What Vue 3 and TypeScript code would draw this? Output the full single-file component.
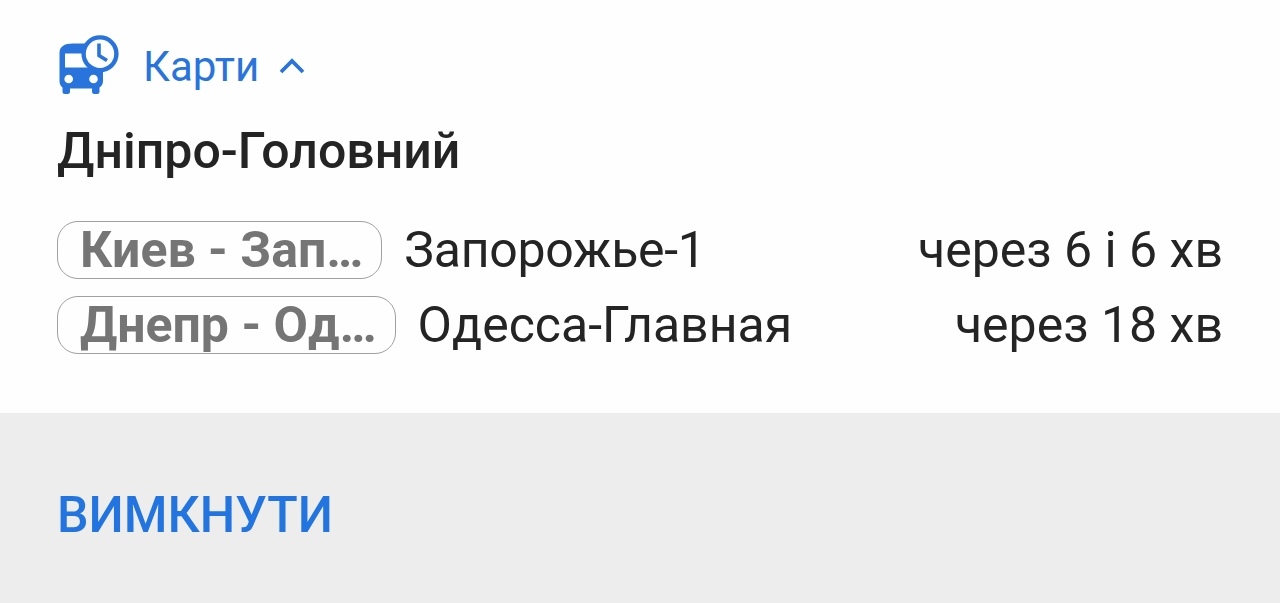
<template>
  <main class="notification">
    <section class="content">
      <header class="app-header">
        <svg class="app-icon" viewBox="0 0 62 60" aria-hidden="true">
          <path
            fill="#2874dc"
            fill-rule="evenodd"
            d="M16 7.500 H36 L46 32 V45 Q46 49 42.500 51.500 V55.500 Q42.500 58 40 58 H37.500 Q35 58 35 55.500 V52.500 H13 V55.500 Q13 58 10.500 58 H8 Q5.500 58 5.500 55.500 V51.500 Q2.500 49 2.500 45 V17 Q2.500 7.500 16 7.500 Z M8 17.500 V31.500 H32 V17.500 Z M11.700 38.700 a4.300 4.300 0 1 0 0 8.600 a4.300 4.300 0 1 0 0 -8.600 Z M36.500 38.700 a4.300 4.300 0 1 0 0 8.600 a4.300 4.300 0 1 0 0 -8.600 Z"
          />
          <circle cx="43" cy="17.800" r="16.400" fill="#fefefe" stroke="#2874dc" stroke-width="4.400" />
          <path d="M42 7.500 V19.500 L50 24.500" fill="none" stroke="#2874dc" stroke-width="3.600" />
        </svg>
        <span class="app-name">Карти</span>
        <svg class="chevron" viewBox="0 0 26 16" aria-hidden="true">
          <path d="M2 14 L13 3 L24 14" fill="none" stroke="#2874dc" stroke-width="3.800" />
        </svg>
      </header>

      <h1>Дніпро-Головний</h1>

      <ul class="departures">
        <li v-for="departure in departures" :key="departure.route">
          <span class="route">{{ departure.route }}</span>
          <span class="destination">{{ departure.destination }}</span>
          <span class="time">{{ departure.time }}</span>
        </li>
      </ul>
    </section>

    <footer class="actions">
      <button type="button">ВИМКНУТИ</button>
    </footer>
  </main>
</template>

<script setup lang="ts">
interface Departure {
  route: string;
  destination: string;
  time: string;
}

const departures: Departure[] = [
  { route: 'Киев - Зап…', destination: 'Запорожье-1', time: 'через 6 і 6 хв' },
  { route: 'Днепр - Од…', destination: 'Одесса-Главная', time: 'через 18 хв' },
];
</script>

<style>
body {
  margin: 0;
  overflow: hidden;
}
</style>

<style scoped>
.notification {
  display: flex;
  flex-direction: column;
  height: 603px;
  background: #fefefe;
  color: #242424;
  font-family: Roboto, sans-serif;
}

.content {
  box-sizing: border-box;
  height: 413px;
  padding: 36px 57px 0;
}

.app-header {
  display: flex;
  align-items: center;
  height: 62px;
  color: #2874dc;
}

.app-icon {
  width: 62px;
  height: 60px;
  margin-bottom: 2px;
  overflow: visible;
}

.app-name {
  margin-left: 24px;
  font-size: 42px;
  line-height: 62px;
}

.chevron {
  width: 26px;
  height: 16px;
  margin: 0 0 2px 20px;
}

h1 {
  margin: 23px 0 40px;
  font-size: 50px;
  font-weight: 500;
  line-height: 60px;
  white-space: nowrap;
}

.departures {
  display: flex;
  flex-direction: column;
  gap: 17px;
  margin: 0;
  padding: 0;
  list-style: none;
}

li {
  display: flex;
  align-items: center;
  height: 58px;
  font-size: 50px;
  line-height: 58px;
  white-space: nowrap;
}

li:first-child .destination {
  letter-spacing: -0.25px;
}

.route {
  box-sizing: border-box;
  height: 58px;
  padding: 0 18px 0 22px;
  border: 1px solid #a0a0a0;
  border-radius: 21px;
  color: #757575;
  font-weight: 700;
  line-height: 56px;
}

.destination {
  margin-left: 22px;
}

.time {
  margin-left: auto;
}

.actions {
  display: flex;
  flex: 1;
  align-items: center;
  padding: 13px 57px 0;
  background: #ededed;
}

button {
  padding: 0;
  border: 0;
  background: none;
  color: #2274e0;
  font-family: inherit;
  font-size: 50px;
  font-weight: 500;
  line-height: 60px;
}
</style>
